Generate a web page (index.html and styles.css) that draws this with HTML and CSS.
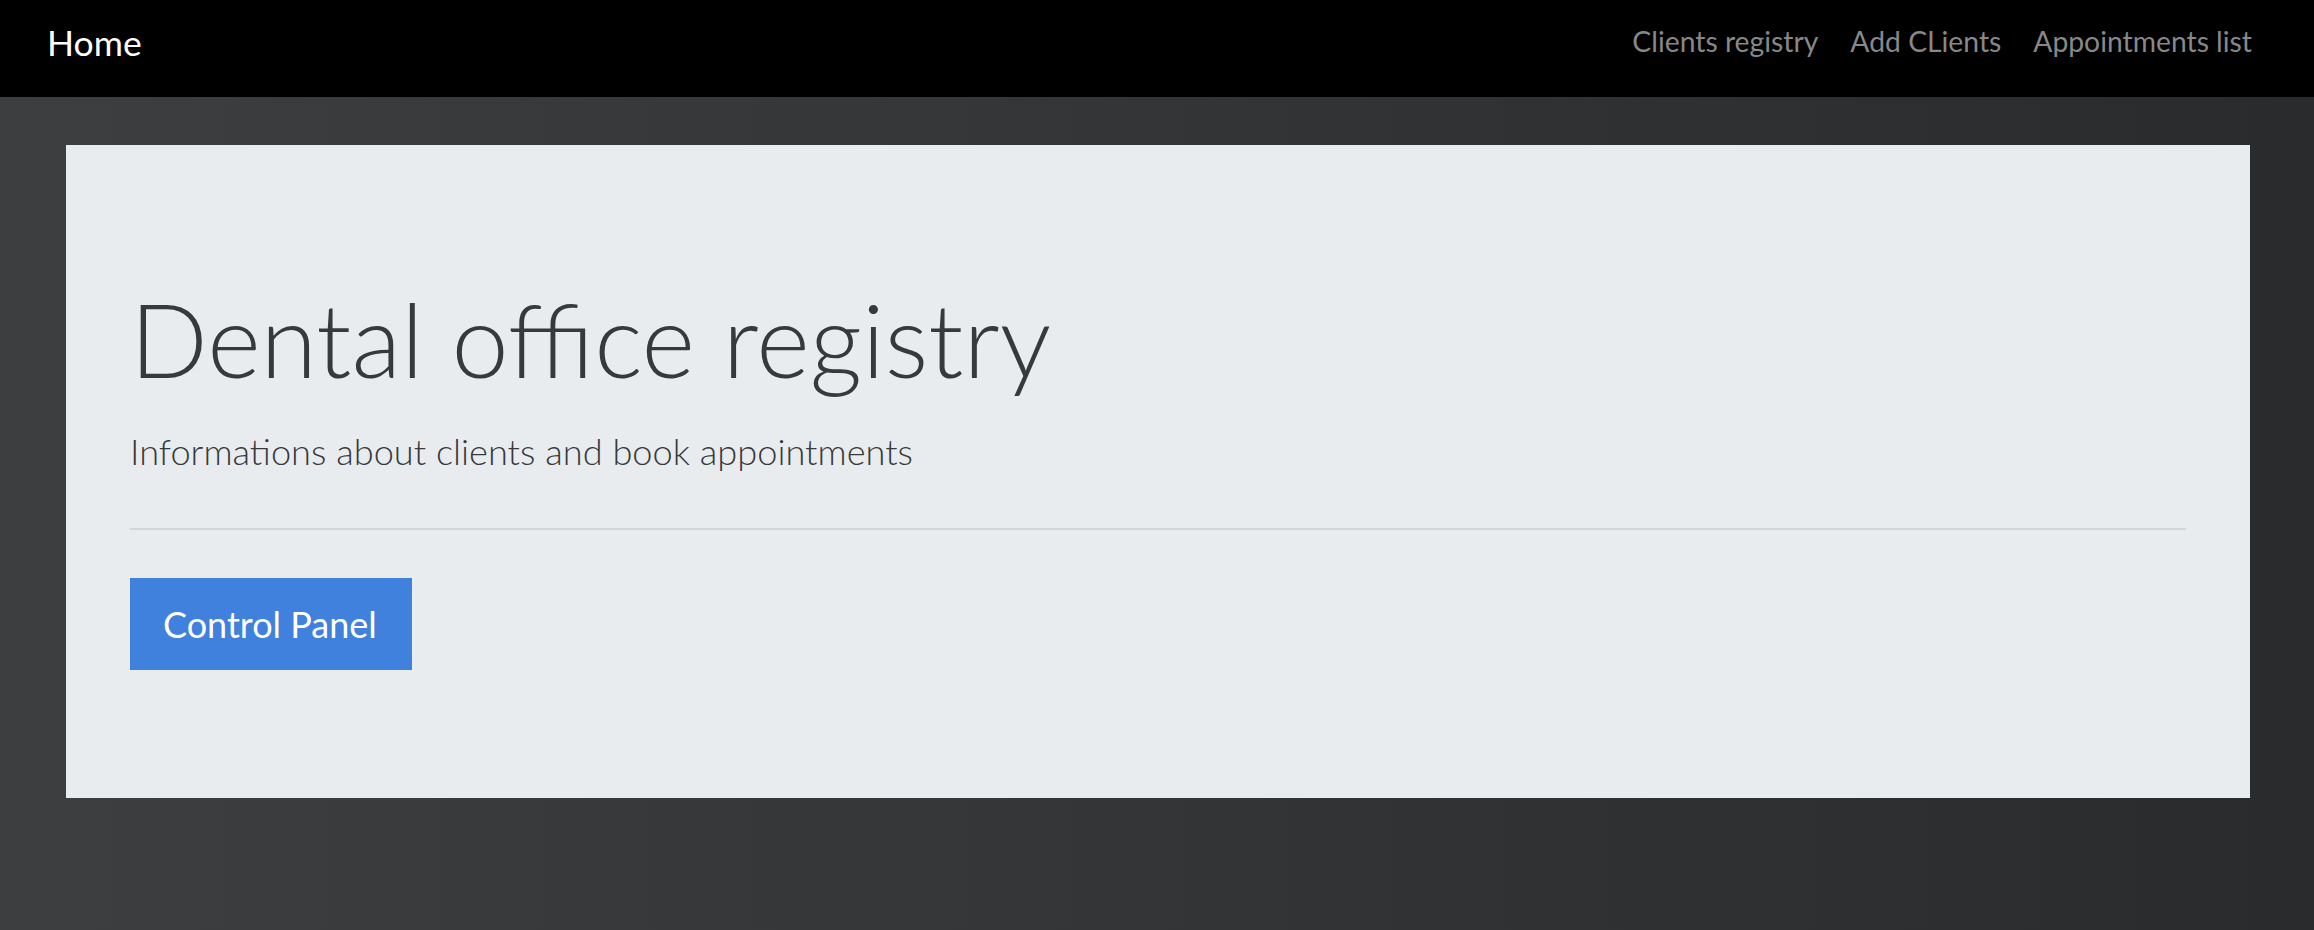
FILE: index.html
```html
<!DOCTYPE html>
<html lang="en">
<head>
<meta charset="utf-8">
<title>Dental office registry</title>
<link rel="stylesheet" href="styles.css">
</head>
<body>
<nav class="navbar">
  <a class="brand" href="#">Home</a>
  <ul class="nav-links">
    <li><a href="#">Clients registry</a></li>
    <li><a href="#">Add CLients</a></li>
    <li><a href="#">Appointments list</a></li>
  </ul>
</nav>
<main class="main">
  <section class="jumbotron">
    <h1 class="title">Dental office registry</h1>
    <p class="lead">Informations about clients and book appointments</p>
    <hr class="divider">
    <a class="btn-primary" href="#">Control Panel</a>
  </section>
</main>
</body>
</html>
```
FILE: styles.css
```css
html, body {
  margin: 0;
  padding: 0;
}
body {
  min-height: 100vh;
  background: linear-gradient(to right, #3d3e40, #2a2b2d);
  font-family: "Lato", "Open Sans", sans-serif;
  color: #373a3c;
}
a { text-decoration: none; }

.navbar {
  display: flex;
  justify-content: space-between;
  align-items: flex-start;
  height: 97px;
  box-sizing: border-box;
  padding: 0 62px 0 47px;
  background: #000;
}
.brand {
  margin-top: 25px;
  font-size: 35.5px;
  line-height: 1;
  color: #fff;
}
.nav-links {
  display: flex;
  gap: 32px;
  list-style: none;
  margin: 27px 0 0;
  padding: 0;
}
.nav-links a {
  font-size: 28.3px;
  line-height: 1;
  color: #888;
}

.main {
  padding: 48px 64px 0 66px;
}
.jumbotron {
  background: #e9ecef;
  padding: 143px 64px 128px;
}
.title {
  margin: 0;
  font-size: 102.5px;
  font-weight: 300;
  line-height: 1;
  color: #373a3c;
}
.lead {
  margin: 42px 0 0;
  font-size: 36.2px;
  font-weight: 300;
  line-height: 1;
  color: #373a3c;
}
.divider {
  margin: 59px 0 48px;
  border: 0;
  border-top: 2px solid #d2d5d8;
  height: 0;
}
.btn-primary {
  display: inline-block;
  height: 92px;
  line-height: 92px;
  padding: 0 35px 0 33px;
  background: #3f81dc;
  color: #fff;
  font-size: 36px;
  vertical-align: top;
}
```
